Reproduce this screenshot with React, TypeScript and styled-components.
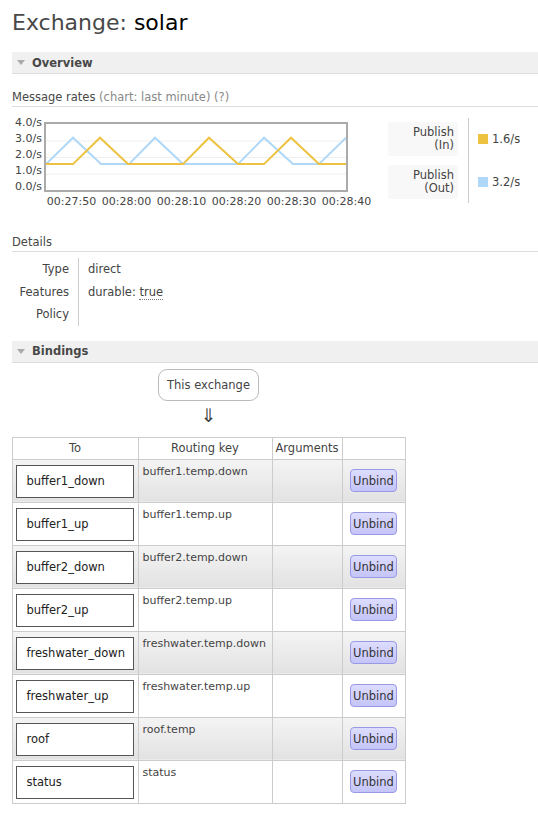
import React from "react";
import styled, { createGlobalStyle } from "styled-components";

const GlobalStyle = createGlobalStyle`
  body {
    margin: 0;
    background: #fff;
    font-family: "DejaVu Sans", Verdana, sans-serif;
    font-size: 11.5px;
    color: #444;
  }
`;

const bindings = [
  { to: "buffer1_down", key: "buffer1.temp.down" },
  { to: "buffer1_up", key: "buffer1.temp.up" },
  { to: "buffer2_down", key: "buffer2.temp.down" },
  { to: "buffer2_up", key: "buffer2.temp.up" },
  { to: "freshwater_down", key: "freshwater.temp.down" },
  { to: "freshwater_up", key: "freshwater.temp.up" },
  { to: "roof", key: "roof.temp" },
  { to: "status", key: "status" },
];

// chart points: [x, rate]
const blue: [number, number][] = [
  [45, 1.6], [72, 3.2], [100, 1.6], [128, 1.6], [154, 3.2], [182, 1.6],
  [237, 1.6], [263, 3.2], [292, 1.6], [318, 1.6], [345, 3.2],
];
const yellow: [number, number][] = [
  [45, 1.6], [72, 1.6], [99, 3.2], [127, 1.6], [182, 1.6], [208, 3.2],
  [237, 1.6], [263, 1.6], [290, 3.2], [318, 1.6], [345, 1.6],
];

const yOf = (v: number) => 68.5 - v * 16.5;
const toPoints = (pts: [number, number][]) =>
  pts.map(([x, v]) => `${x - 44},${yOf(v)}`).join(" ");

export default function App() {
  return (
    <Page>
      <GlobalStyle />
      <Title>
        Exchange: <strong>solar</strong>
      </Title>

      <SectionBar>
        <Triangle />
        Overview
      </SectionBar>

      <SubHeading>
        Message rates <Muted>(chart: last minute) (?)</Muted>
      </SubHeading>

      <ChartRow>
        <ChartWrap>
          <YAxis>
            <span>4.0/s</span>
            <span>3.0/s</span>
            <span>2.0/s</span>
            <span>1.0/s</span>
            <span>0.0/s</span>
          </YAxis>
          <div>
            <svg width="304" height="70" viewBox="-1 0 304 70">
              {[1, 2, 3].map((v) => (
                <line key={v} x1="0" x2="302" y1={yOf(v)} y2={yOf(v)} stroke="#f0f0f0" />
              ))}
              <polyline points={toPoints(blue)} fill="none" stroke="#afd8f8" strokeWidth="2" />
              <polyline points={toPoints(yellow)} fill="none" stroke="#edc240" strokeWidth="2" />
              <rect x="0" y="1" width="302" height="68" fill="none" stroke="#aaa" strokeWidth="2" />
            </svg>
            <XAxis>
              <span>00:27:50</span>
              <span>00:28:00</span>
              <span>00:28:10</span>
              <span>00:28:20</span>
              <span>00:28:30</span>
              <span>00:28:40</span>
            </XAxis>
          </div>
        </ChartWrap>

        <Legend>
          <LegendLabels>
            <LegendBox>
              Publish
              <br />
              (In)
            </LegendBox>
            <LegendBox>
              Publish
              <br />
              (Out)
            </LegendBox>
          </LegendLabels>
          <LegendValues>
            <LegendValue>
              <Swatch $color="#edc240" />
              1.6/s
            </LegendValue>
            <LegendValue>
              <Swatch $color="#afd8f8" />
              3.2/s
            </LegendValue>
          </LegendValues>
        </Legend>
      </ChartRow>

      <SubHeading $top={32}>Details</SubHeading>

      <DetailsTable>
        <tbody>
          <tr>
            <th>Type</th>
            <td>direct</td>
          </tr>
          <tr>
            <th>Features</th>
            <td>
              durable: <Abbr>true</Abbr>
            </td>
          </tr>
          <tr>
            <th>Policy</th>
            <td></td>
          </tr>
        </tbody>
      </DetailsTable>

      <SectionBar $top={15}>
        <Triangle />
        Bindings
      </SectionBar>

      <BindingsArea>
        <ThisExchange>This exchange</ThisExchange>
        <Arrow>⇓</Arrow>
        <BindingsTable>
          <colgroup>
            <col style={{ width: 126 }} />
            <col style={{ width: 134 }} />
            <col style={{ width: 70 }} />
            <col style={{ width: 63 }} />
          </colgroup>
          <thead>
            <tr>
              <th>To</th>
              <th>Routing key</th>
              <th>Arguments</th>
              <th></th>
            </tr>
          </thead>
          <tbody>
            {bindings.map((b, i) => (
              <BindingRow key={b.to} $alt={i % 2 === 0}>
                <td>
                  <QueueBox>{b.to}</QueueBox>
                </td>
                <KeyCell>{b.key}</KeyCell>
                <td></td>
                <ButtonCell>
                  <UnbindButton>Unbind</UnbindButton>
                </ButtonCell>
              </BindingRow>
            ))}
          </tbody>
        </BindingsTable>
      </BindingsArea>
    </Page>
  );
}

const Page = styled.div`
  padding: 9px 0 20px 12px;
`;

const Title = styled.h1`
  margin: 0;
  font-size: 22px;
  font-weight: normal;
  color: #484848;
  line-height: 28px;

  strong {
    font-weight: normal;
    color: #000;
  }
`;

const SectionBar = styled.div<{ $top?: number }>`
  margin-top: ${(p) => p.$top ?? 15}px;
  height: 21px;
  display: flex;
  align-items: center;
  gap: 7px;
  padding-left: 5px;
  background: #f0f0f0;
  border-bottom: 1px solid #ddd;
  font-weight: bold;
  font-size: 11.5px;
  color: #484848;
`;

const Triangle = styled.span`
  width: 0;
  height: 0;
  border-left: 4px solid transparent;
  border-right: 4px solid transparent;
  border-top: 5px solid #aaa;
`;

const SubHeading = styled.div<{ $top?: number }>`
  margin-top: ${(p) => p.$top ?? 16}px;
  padding-bottom: 2px;
  border-bottom: 1px solid #ddd;
  line-height: 14px;
  color: #484848;
`;

const Muted = styled.span`
  color: #888;
`;

const ChartRow = styled.div`
  display: flex;
  margin-top: 11px;
  height: 85px;
`;

const ChartWrap = styled.div`
  display: flex;
  padding-top: 4px;
`;

const YAxis = styled.div`
  width: 30px;
  height: 76px;
  margin-top: -5px;
  margin-right: 2px;
  display: flex;
  flex-direction: column;
  justify-content: space-between;
  align-items: flex-end;
  line-height: 12px;
  font-size: 11px;
`;

const XAxis = styled.div`
  display: flex;
  line-height: 12px;
  margin-top: 1px;
  font-size: 11px;

  span {
    width: 55px;
    text-align: center;
  }
`;

const Legend = styled.div`
  display: flex;
  margin-left: 14px;
`;

const LegendLabels = styled.div`
  display: flex;
  flex-direction: column;
  gap: 9px;
  padding-top: 4px;
  padding-right: 10px;
  border-right: 1px solid #ccc;
`;

const LegendBox = styled.div`
  width: 66px;
  height: 34px;
  padding-right: 4px;
  background: #f8f8f8;
  border-radius: 3px;
  text-align: right;
  line-height: 13px;
  display: flex;
  flex-direction: column;
  justify-content: center;
  align-items: flex-end;
`;

const LegendValues = styled.div`
  display: flex;
  flex-direction: column;
  gap: 9px;
  padding-top: 4px;
  padding-left: 9px;
`;

const LegendValue = styled.div`
  height: 34px;
  display: flex;
  align-items: center;
  gap: 4px;
`;

const Swatch = styled.span<{ $color: string }>`
  width: 10px;
  height: 10px;
  background: ${(p) => p.$color};
`;

const DetailsTable = styled.table`
  border-collapse: collapse;
  margin-top: 6px;

  th {
    width: 57px;
    text-align: right;
    font-weight: normal;
    padding: 0 9px 0 0;
    height: 22.5px;
    border-right: 1px solid #ccc;
  }

  td {
    padding: 0 0 0 9px;
    vertical-align: middle;
  }
`;

const Abbr = styled.span`
  border-bottom: 1px dotted #777;
`;

const BindingsArea = styled.div`
  width: 393px;
  display: flex;
  flex-direction: column;
  align-items: center;
`;

const ThisExchange = styled.div`
  margin-top: 6px;
  width: 99px;
  height: 30px;
  border: 1px solid #bbb;
  border-radius: 9px;
  display: flex;
  align-items: center;
  justify-content: center;
`;

const Arrow = styled.div`
  margin-top: 3px;
  font-size: 19px;
  line-height: 22px;
  color: #444;
`;

const BindingsTable = styled.table`
  margin-top: 11px;
  width: 393px;
  table-layout: fixed;
  border-collapse: collapse;

  th {
    height: 21px;
    font-weight: normal;
    border: 1px solid #ccc;
    text-align: center;
    background: #fff;
    padding: 0;
    white-space: nowrap;
  }

  td {
    border: 1px solid #ccc;
    padding: 0;
  }
`;

const BindingRow = styled.tr<{ $alt: boolean }>`
  height: 43px;

  td {
    background: ${(p) =>
      p.$alt ? "linear-gradient(#f4f4f4, #e2e2e2)" : "#fff"};
  }
`;

const QueueBox = styled.div`
  margin: 4px 4px 3px 3px;
  height: 31px;
  border: 1px solid #555;
  background: #fff;
  display: flex;
  align-items: center;
  padding-left: 10px;
  color: #222;
  white-space: nowrap;
`;

const KeyCell = styled.td`
  vertical-align: top;
  white-space: nowrap;
  font-size: 11px;

  && {
    padding: 5px 0 0 4px;
  }
`;

const ButtonCell = styled.td`
  text-align: center;
  vertical-align: middle;
`;

const UnbindButton = styled.button`
  font-family: "DejaVu Sans", Verdana, sans-serif;
  font-size: 11.5px;
  color: #333;
  background: linear-gradient(#ddddff, #c4c4f8);
  border: 1px solid #9999e6;
  border-radius: 4px;
  padding: 0 2px;
  height: 23px;
`;
